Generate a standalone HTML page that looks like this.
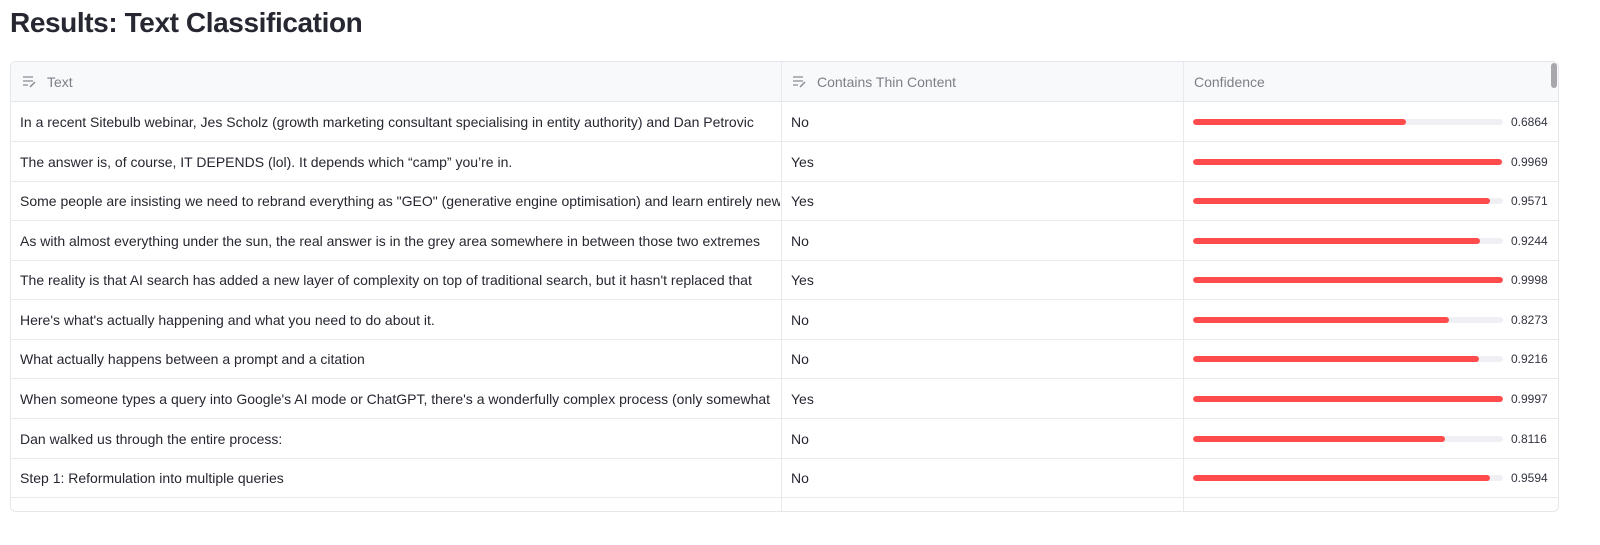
<!DOCTYPE html>
<html><head><meta charset="utf-8"><style>
body{margin:0;background:#fff;font-family:"Liberation Sans",sans-serif;color:#262730;width:1600px;height:545px;overflow:hidden;position:relative}
h1{position:absolute;left:10px;top:5px;margin:0;font-size:28px;line-height:36px;font-weight:bold;color:#262730;letter-spacing:-0.4px}
.tbl{position:absolute;left:10px;top:61px;width:1547px;height:449px;border:1px solid #e6e7eb;border-radius:6px;overflow:hidden}
.hdr{position:absolute;left:0;top:0;width:100%;height:39px;background:#f8f9fb;border-bottom:1px solid #e6e7eb}
.c{position:absolute;white-space:nowrap;overflow:hidden;font-size:14px}
.h{color:#7d7f87;top:12px}
.vl{position:absolute;top:0;bottom:0;width:1px;background:#e9eaee}
.row{position:absolute;left:0;width:100%;height:39px;border-bottom:1px solid #e9eaee}
.row .c{top:12px}
.bar{position:absolute;left:1182px;top:17px;width:310px;height:6px;border-radius:3px;background:#f0eff3;overflow:hidden}
.bar i{display:block;height:100%;background:#ff4b4b;border-radius:3px}
.v{position:absolute;left:1500px;top:13px;font-size:12px;color:#31333f}
.sb{position:absolute;left:1540px;top:1px;width:6px;height:25px;background:#a8a8ac;border-radius:3px}
</style></head><body>
<h1>Results: Text Classification</h1>
<div class="tbl">
<div class="hdr">
<svg style="position:absolute;left:11px;top:13px" width="15" height="13" viewBox="0 0 15 13"><path d="M1 2h10M1 6h10M1 10h5" stroke="#8a8c94" stroke-width="1.3" fill="none"/><path d="M8 12l5-5" stroke="#8a8c94" stroke-width="1.5"/></svg>
<div class="c h" style="left:36px">Text</div>
<svg style="position:absolute;left:781px;top:13px" width="15" height="13" viewBox="0 0 15 13"><path d="M1 2h10M1 6h10M1 10h5" stroke="#8a8c94" stroke-width="1.3" fill="none"/><path d="M8 12l5-5" stroke="#8a8c94" stroke-width="1.5"/></svg>
<div class="c h" style="left:806px">Contains Thin Content</div>
<div class="c h" style="left:1183px">Confidence</div>
<div class="sb"></div>
</div>
<div class="vl" style="left:770px"></div>
<div class="vl" style="left:1172px"></div>

<div class="row" style="top:40px"><div class="c" style="left:9px;width:760px">In a recent Sitebulb webinar, Jes Scholz (growth marketing consultant specialising in entity authority) and Dan Petrovic</div><div class="c" style="left:780px">No</div><div class="bar"><i style="width:68.64%"></i></div><div class="v">0.6864</div></div>
<div class="row" style="top:80px"><div class="c" style="left:9px;width:760px">The answer is, of course, IT DEPENDS (lol). It depends which “camp” you’re in.</div><div class="c" style="left:780px">Yes</div><div class="bar"><i style="width:99.69%"></i></div><div class="v">0.9969</div></div>
<div class="row" style="top:119px"><div class="c" style="left:9px;width:760px">Some people are insisting we need to rebrand everything as "GEO" (generative engine optimisation) and learn entirely new</div><div class="c" style="left:780px">Yes</div><div class="bar"><i style="width:95.71%"></i></div><div class="v">0.9571</div></div>
<div class="row" style="top:159px"><div class="c" style="left:9px;width:760px">As with almost everything under the sun, the real answer is in the grey area somewhere in between those two extremes</div><div class="c" style="left:780px">No</div><div class="bar"><i style="width:92.44%"></i></div><div class="v">0.9244</div></div>
<div class="row" style="top:198px"><div class="c" style="left:9px;width:760px">The reality is that AI search has added a new layer of complexity on top of traditional search, but it hasn't replaced that</div><div class="c" style="left:780px">Yes</div><div class="bar"><i style="width:99.98%"></i></div><div class="v">0.9998</div></div>
<div class="row" style="top:238px"><div class="c" style="left:9px;width:760px">Here's what's actually happening and what you need to do about it.</div><div class="c" style="left:780px">No</div><div class="bar"><i style="width:82.73%"></i></div><div class="v">0.8273</div></div>
<div class="row" style="top:277px"><div class="c" style="left:9px;width:760px">What actually happens between a prompt and a citation</div><div class="c" style="left:780px">No</div><div class="bar"><i style="width:92.16%"></i></div><div class="v">0.9216</div></div>
<div class="row" style="top:317px"><div class="c" style="left:9px;width:760px">When someone types a query into Google's AI mode or ChatGPT, there's a wonderfully complex process (only somewhat</div><div class="c" style="left:780px">Yes</div><div class="bar"><i style="width:99.97%"></i></div><div class="v">0.9997</div></div>
<div class="row" style="top:357px"><div class="c" style="left:9px;width:760px">Dan walked us through the entire process:</div><div class="c" style="left:780px">No</div><div class="bar"><i style="width:81.16%"></i></div><div class="v">0.8116</div></div>
<div class="row" style="top:396px"><div class="c" style="left:9px;width:760px">Step 1: Reformulation into multiple queries</div><div class="c" style="left:780px">No</div><div class="bar"><i style="width:95.94%"></i></div><div class="v">0.9594</div></div>
<div class="row" style="top:436px;border:none"><div class="c" style="left:9px;width:760px;top:10px">Instead of processing the query as-is, AI search systems rewrite it into multiple variations</div></div>
</div>
</body></html>
